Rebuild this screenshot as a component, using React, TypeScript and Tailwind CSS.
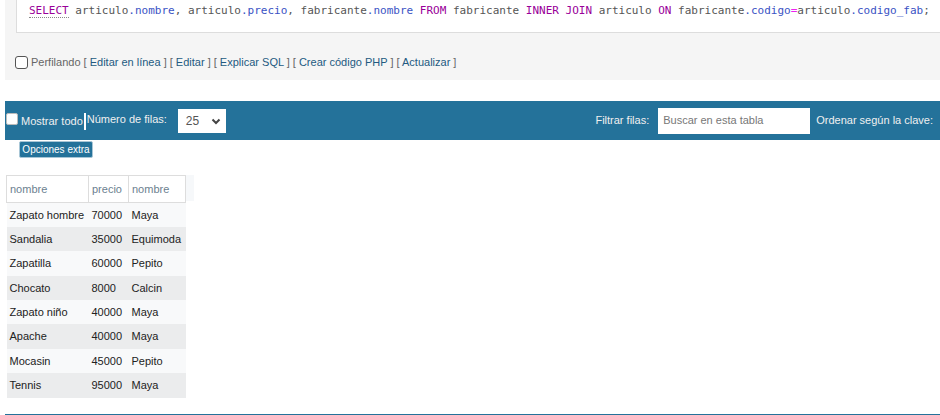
import React from "react";

const rows: [string, string, string][] = [
  ["Zapato hombre", "70000", "Maya"],
  ["Sandalia", "35000", "Equimoda"],
  ["Zapatilla", "60000", "Pepito"],
  ["Chocato", "8000", "Calcin"],
  ["Zapato niño", "40000", "Maya"],
  ["Apache", "40000", "Maya"],
  ["Mocasin", "45000", "Pepito"],
  ["Tennis", "95000", "Maya"],
];

const K = ({ children }: { children: React.ReactNode }) => (
  <span className="text-[#990099]">{children}</span>
);
const P = ({ children }: { children: React.ReactNode }) => (
  <span className="text-[#3a52c4]">{children}</span>
);

export default function App() {
  return (
    <div className="w-[940px] h-[415px] overflow-hidden bg-white font-['Liberation_Sans',Arial,sans-serif] text-[11px]">
      {/* top panel */}
      <div className="ml-[5px] h-[80px] bg-[#f5f5f5]">
        <div className="ml-[11px] h-[33px] bg-white border-b border-l border-[#dddddd] pl-[12px] pt-[3px] font-['DejaVu_Sans_Mono',monospace] text-[11px] leading-[16px] text-[#555] whitespace-nowrap">
          <span className="text-[#990099] border-b border-dotted border-[#888]">SELECT</span> articulo<P>.nombre</P>, articulo<P>.precio</P>, fabricante<P>.nombre</P> <K>FROM</K> fabricante <K>INNER</K> <K>JOIN</K> articulo <K>ON</K> fabricante<P>.codigo</P><span className="text-[#ee22ee]">=</span>articulo<P>.codigo_fab</P>;
        </div>
        <div className="flex items-center pl-[10px] pt-[21px] text-[#666] whitespace-nowrap">
          <span className="w-[13px] h-[13px] border border-[#555] rounded-[3px] bg-white mr-[3px]" />
          <span>Perfilando</span>
          <span className="ml-[3px]">[ <a className="text-[#235a81]">Editar en línea</a> ]</span>
          <span className="ml-[3px]">[ <a className="text-[#235a81]">Editar</a> ]</span>
          <span className="ml-[3px]">[ <a className="text-[#235a81]">Explicar SQL</a> ]</span>
          <span className="ml-[3px]">[ <a className="text-[#235a81]">Crear código PHP</a> ]</span>
          <span className="ml-[3px]">[ <a className="text-[#235a81]">Actualizar</a> ]</span>
        </div>
      </div>

      {/* nav bar */}
      <div className="mt-[21px] ml-[5px] h-[39px] bg-[#24729a] flex items-center text-white text-[11px] whitespace-nowrap">
        <span className="ml-[1px] w-[12px] h-[12px] bg-white rounded-[2px] border border-[#bbb] -mt-[3px]" />
        <span className="ml-[3px] mt-[2px] text-[#f0f0f0]">Mostrar todo</span>
        <span className="ml-[1px] w-[2px] h-[17px] bg-white mt-[1px]" />
        <span className="ml-[1px] -mt-[2px] text-[#f0f0f0]">Número de filas:</span>
        <div className="ml-[11px] w-[48px] h-[24px] bg-white flex items-center justify-between pl-[8px] pr-[4px] text-[#555] text-[12px]">
          <span>25</span>
          <svg width="12" height="12" viewBox="0 0 12 12">
            <path d="M2.5 4.5 L6 8 L9.5 4.5" stroke="#444" strokeWidth="2" fill="none" />
          </svg>
        </div>
        <div className="flex-1" />
        <span className="text-[#f0f0f0]">Filtrar filas:</span>
        <div className="ml-[9px] w-[152px] h-[26px] bg-white flex items-center pl-[5px] text-[#777]">
          Buscar en esta tabla
        </div>
        <span className="ml-[6px] mr-[7px] text-[#f0f0f0]">Ordenar según la clave:</span>
      </div>

      {/* options button */}
      <div className="ml-[19px] mt-[1px] w-[74px] h-[17px] bg-[#24729a] border border-[#a8c6d6] rounded-[2px] text-white text-[10px] flex items-center justify-center">
        Opciones extra
      </div>

      {/* table */}
      <div className="ml-[6px] mt-[17px] flex">
        <table className="border-collapse text-[11px] text-[#222]">
          <thead>
            <tr className="h-[27px]">
              <th className="w-[82px] border border-[#dddddd] text-left font-normal text-[#6c7f90] pl-[3px]">nombre</th>
              <th className="w-[40px] border border-[#dddddd] text-left font-normal text-[#6c7f90] pl-[3px]">precio</th>
              <th className="w-[57px] border border-[#dddddd] text-left font-normal text-[#6c7f90] pl-[3px]">nombre</th>
            </tr>
          </thead>
          <tbody>
            {rows.map((r, i) => (
              <tr key={i} className={`h-[24.4px] ${i % 2 === 0 ? "bg-[#f8f9fa]" : "bg-[#ebeced]"}`}>
                <td className="pl-[3px] whitespace-nowrap">{r[0]}</td>
                <td className="pl-[3px]">{r[1]}</td>
                <td className="pl-[3px]">{r[2]}</td>
              </tr>
            ))}
          </tbody>
        </table>
        <div className="w-[8px] h-[26px] bg-[#f6f8fa]" />
      </div>

      {/* bottom line */}
      <div className="ml-[5px] mt-[16px] h-[2px] bg-[#24729a]" />
    </div>
  );
}
